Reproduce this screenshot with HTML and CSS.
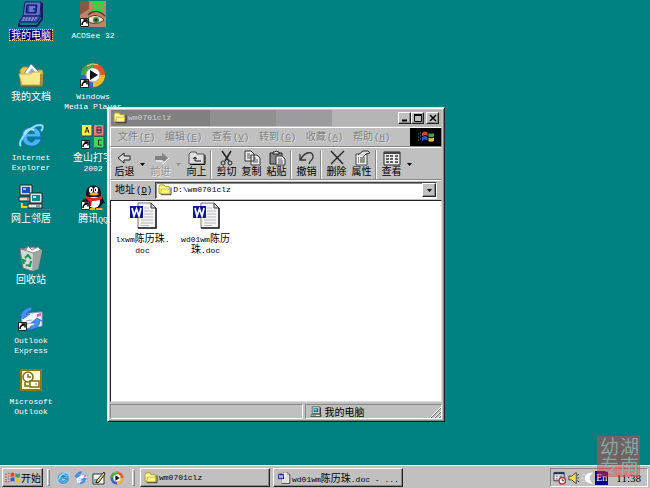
FILE: index.html
```html
<!DOCTYPE html>
<html lang="zh-CN">
<head>
<meta charset="utf-8">
<title>wm0701clz</title>
<link rel="stylesheet" href="styles.css">
</head>
<body>
<svg class="sprites" aria-hidden="true">
  <symbol id="folder" viewBox="0 0 16 14">
    <path d="M1 11V3l1-2h5l1 2h5v8z" fill="#f8ee78" stroke="#b09a20"/>
    <path d="M2 4h4l1 1h5" stroke="#fff" fill="none"/>
    <path d="M3 12.500h12V4" stroke="#222" fill="none"/>
    <path d="M3 11.500L4 6h10l-1 5.500z" fill="#fff68c" stroke="#a89018" stroke-width=".6"/>
  </symbol>
  <symbol id="word" viewBox="0 0 28 27">
    <path d="M9 1h13l5 5v20H9z" fill="#f4f4f8" stroke="#777"/>
    <path d="M27 6v20H9" fill="none" stroke="#222" stroke-width="1.500"/>
    <path d="M22 1v5h5z" fill="#ddd" stroke="#333"/>
    <path d="M15 6h5M15 9h9M15 12h9M15 15h9M12 18h12M12 21h12M12 23.500h8" stroke="#b8b8bc"/>
    <path d="M1 4h13v12H1z" fill="#101890"/>
    <path d="M3 6l2 8 2.500-7L10 14l2-8" fill="none" stroke="#fff" stroke-width="1.700"/>
  </symbol>
  <symbol id="ie" viewBox="0 0 26 26">
    <path d="M23 16c-2 10-19 10-19-3C4 1 23 1 23 14H9c1 7 7 6 8 2z" fill="#4bb4f4" stroke="#176fc4"/>
    <path d="M9 11c1-5 7-5 8 0z" fill="#067f8c"/>
    <path d="M3 23C-2 19 13 2 22 2c4 0 3 4 1 6" fill="none" stroke="#8bdcff" stroke-width="2"/>
    <path d="M6 11c2-4 6-6 10-4" fill="none" stroke="#b8eaff" stroke-width="1.500"/>
  </symbol>
  <symbol id="media" viewBox="0 0 26 26">
    <circle cx="13" cy="13" r="12" fill="#e8541c"/>
    <path d="M13 13V1a12 12 0 0 0-12 12z" fill="#43a548"/>
    <path d="M13 13H1a12 12 0 0 0 12 12z" fill="#3a63c8"/>
    <path d="M13 13v12a12 12 0 0 0 12-12z" fill="#f5bb27"/>
    <path d="M7 4a12 12 0 0 1 11-1" fill="none" stroke="#ffc18e"/>
    <circle cx="13" cy="13" r="7" fill="#fff" stroke="#aaa"/>
    <path d="M10 8l8 5-8 5z" fill="#111"/>
  </symbol>
  <symbol id="mail" viewBox="0 0 26 26">
    <path d="M3 8l21-2v14L5 23z" fill="#f5f8ff" stroke="#8aa2d8"/>
    <path d="M19 8l4-1v3l-4 1z" fill="#d76a9a"/>
    <path d="M8 15l6-1M8 18l5-1" stroke="#99aacc"/>
    <path d="M3 11C3 5 8 2 14 1l-1 4c-3 0-5 2-5 3l4 0-7 5-4-4z" fill="#4b91f2" stroke="#2062cf" stroke-width=".7"/>
    <path d="M22 14c0 6-4 9-11 10l2-4c3 0 4-2 4-3h-4l6-5 5 3z" fill="#4b91f2" stroke="#2062cf" stroke-width=".7"/>
  </symbol>
  <symbol id="shortcut" viewBox="0 0 9 9">
    <path d="M.5.5h8v8h-8z" fill="#fff" stroke="#222"/>
    <path d="M2 7c0-3 1-4 4-4M3.500 2H7v3.500" fill="none" stroke="#000" stroke-width="1.500"/>
  </symbol>
  <symbol id="pc" viewBox="0 0 16 16">
    <path d="M3 1h10v9H3z" fill="#d5d5c8" stroke="#555"/>
    <path d="M5 3h6v5H5z" fill="#0e7890"/>
    <path d="M6 4h3v2H6z" fill="#8fe7ec"/>
    <path d="M2 11h11l1 3H1z" fill="#eee" stroke="#333"/>
    <path d="M3 12.500h5" stroke="#398b75"/>
    <path d="M14 2v9l1 3" stroke="#111" fill="none"/>
  </symbol>
  <symbol id="flag" viewBox="0 0 18 14">
    <path d="M7 2c2-1 3-1 4 0v4c-1-1-2-1-4 0z" fill="#e5442a"/>
    <path d="M12 2c2 1 3 1 5 0v4c-2 1-3 1-5 0z" fill="#43a548"/>
    <path d="M7 7c2-1 3-1 4 0v4c-1-1-2-1-4 0z" fill="#2759d4"/>
    <path d="M12 7c2 1 3 1 5 0v4c-2 1-3 1-5 0z" fill="#eac22e"/>
    <path d="M1 3h2M4 2h2M1 6h2M4 5h2M1 9h2M4 8h2M1 11h2M4 11h2" stroke="#d14a3a"/>
  </symbol>
  <symbol id="flag-dark" viewBox="0 0 18 14">
    <path d="M5 3c2-2 4-2 6 0v4C9 5 7 5 5 7z" fill="#e5442a"/>
    <path d="M11 3c2 1 4 1 6 0v4c-2 1-4 1-6 0z" fill="#43a548"/>
    <path d="M5 7c2-2 4-2 6 0v4c-2-2-4-2-6 0z" fill="#2759d4"/>
    <path d="M11 7c2 1 4 1 6 0v4c-2 1-4 1-6 0z" fill="#eac22e"/>
    <path d="M5 7c2-2 4-2 6 0 2 1 4 1 6 0M11 3v8" fill="none" stroke="#000"/>
    <path d="M1 4h1M3 3h1M1 7h1M3 6h1M1 10h1M3 9h1" stroke="#58a"/>
  </symbol>
</svg>

<main class="desktop">
  <ul class="icons">
    <li><a class="shortcut selected" href="#"><svg class="big" viewBox="0 0 26 26"><path d="M7 1h16l-1 14H5z" fill="#6472c8" stroke="#141c70"/><path d="M9 4h10l-1 8H8z" fill="#28379f" stroke="#0c145d"/><path d="M11 6h6M11 8h4M11 10h5" stroke="#aeb9f0"/><path d="M5 15l-4 6h18l4-6z" fill="#4652a8" stroke="#101866"/><path d="M5 17h14M4 19h13" stroke="#a3ade9" stroke-dasharray="2 1"/><path d="M1 22v3h18l5-7V2" fill="none" stroke="#151b64" stroke-width="2"/></svg><span class="label">我的电脑</span></a></li>
    <li><a class="shortcut" href="#"><svg class="big" viewBox="0 0 26 26"><path d="M2 8l3-3h5l2 3h12l1 2-1 14H3z" fill="#e3c952" stroke="#a38f36"/><path d="M7 10l6-8 8 8v8H7z" fill="#fff" stroke="#889"/><path d="M10 11l4-5 4 5z" fill="#85aee9"/><path d="M1 12h11l3-2h8l-1 13H4z" fill="#fae98b" stroke="#c8ad4c"/><path d="M4 24h19V12" fill="none" stroke="#776a29"/></svg><span class="label">我的文档</span></a></li>
    <li><a class="shortcut" href="#"><svg class="big"><use href="#ie"/></svg><span class="label en">Internet<br>Explorer</span></a></li>
    <li><a class="shortcut" href="#"><svg class="big" viewBox="0 0 26 26"><path d="M2 1h12v10H2zM1 13h13v4H1z" fill="#ddd" stroke="#222"/><path d="M4 3h8v6H4z" fill="#174bc9"/><path d="M5 4h3v2H5z" fill="#9bc4ff"/><path d="M4 19v4h7" fill="none" stroke="#e3cc2c" stroke-width="2"/><path d="M12 9h12v10H12zM10 20h14v4H10z" fill="#e5e5e5" stroke="#222"/><path d="M14 11h8v6h-8z" fill="#07899a"/><path d="M15 12h3v2h-3z" fill="#b5ffff"/><path d="M18 22h4M9 15h3" stroke="#444"/></svg><span class="label">网上邻居</span></a></li>
    <li><a class="shortcut" href="#"><svg class="big" viewBox="0 0 26 26"><path d="M2 4l13-2 9 3-4 19-6 2-9-3z" fill="#d7d9d8" stroke="#777"/><path d="M15 8l9-3-4 19-6 2z" fill="#9da6a3"/><path d="M3 4l5 1 2-4 4 4 6-3 3 3-8 3z" fill="#fff" stroke="#888"/><path d="M7 13l3-3 3 4M13 16l-1 5-4-1M6 19l-1-4 3 1" fill="none" stroke="#17934c" stroke-width="2"/></svg><span class="label">回收站</span></a></li>
    <li><a class="shortcut" href="#"><svg class="big"><use href="#mail"/><use href="#shortcut" x="0" y="16" width="9" height="9"/></svg><span class="label en">Outlook<br>Express</span></a></li>
    <li><a class="shortcut" href="#"><svg class="big" viewBox="0 0 26 26"><path d="M3 3h20v20H3z" fill="#fff9d8" stroke="#8b7a0a" stroke-width="2"/><circle cx="10" cy="10" r="5" fill="#fff" stroke="#7c6c06" stroke-width="1.500"/><path d="M10 7v3h3M7 15v4h4" fill="none" stroke="#7c6c06" stroke-width="1.500"/><path d="M12 14h9v6h-9z" fill="#fff" stroke="#7c6c06" stroke-width="1.500"/><path d="M17 17h2" stroke="#7c6c06"/></svg><span class="label en">Microsoft<br>Outlook</span></a></li>
  </ul>
  <ul class="icons">
    <li><a class="shortcut" href="#"><svg class="big" viewBox="0 0 26 26"><path d="M0 0h26v26H0z" fill="#bd846c"/><path d="M0 0h9v8L0 14z" fill="#8c5844"/><path d="M8 14c5-5 11-5 17 1" fill="none" stroke="#633428" stroke-width="1.500"/><path d="M6 19c5-6 13-6 18 0-5 4-12 5-18 0z" fill="#eedccc" stroke="#442"/><circle cx="16" cy="19" r="3" fill="#388646"/><circle cx="16" cy="19" r="1.300" fill="#132"/><path d="M12 2h5l-2 3c3 1 1 5-4 4M19 3c3-3 6 0 3 2l-4 4h6" fill="none" stroke="#1de52c" stroke-width="2"/><use href="#shortcut" x="0" y="17" width="9" height="9"/></svg><span class="label en">ACDSee 32</span></a></li>
    <li><a class="shortcut" href="#"><svg class="big"><use href="#media"/><use href="#shortcut" x="0" y="17" width="9" height="9"/></svg><span class="label en">Windows<br>Media Player</span></a></li>
    <li><a class="shortcut" href="#"><svg class="big" viewBox="0 0 26 26"><path d="M2 2h10v11H2z" fill="#f8ec48"/><path d="M14 2h10v11H14z" fill="#ee7c86"/><path d="M14 14h10v11H14z" fill="#3bd85a"/><path d="M2 13h10V2M14 13h10V2M14 25h10V14" fill="none" stroke="#444"/><path d="M5 10l2-6 2 6M6 8h3M17 4v6h4V7h-4 4V4zM21.500 17h-3v5h3" fill="none" stroke="#333"/><use href="#shortcut" x="1" y="17" width="9" height="9"/></svg><span class="label">金山打字<br><span class="en">2002</span></span></a></li>
    <li><a class="shortcut" href="#"><svg class="big" viewBox="0 0 26 26"><path d="M4 14l-3 5 5 1M22 13l3 6-5 1" fill="#171820"/><ellipse cx="14" cy="17" rx="9" ry="8" fill="#171820"/><ellipse cx="14" cy="18" rx="6" ry="6" fill="#fff"/><path d="M6 9c0-10 15-10 15 0v4H6z" fill="#171820"/><ellipse cx="11" cy="6" rx="2" ry="3" fill="#fff"/><ellipse cx="16" cy="6" rx="2" ry="3" fill="#fff"/><path d="M11.500 5v2M15.500 5v2" stroke="#000"/><path d="M9 10c3-2 7-2 10 0-3 2-7 2-10 0zM9 24h6v2H8zM16 24h6l1 2h-7z" fill="#f6ab20"/><path d="M5 11c6 4 12 4 17 0v4c-5 2-7 2-10 2l-1 5H8v-6l-3-2z" fill="#e5282a"/><use href="#shortcut" x="1" y="17" width="9" height="9"/></svg><span class="label">腾讯<span class="en">QQ</span></span></a></li>
  </ul>

  <section class="window" aria-label="wm0701clz">
    <header class="titlebar">
      <svg class="small"><use href="#folder"/></svg>
      <h1 class="en">wm0701clz</h1>
      <button class="bevel winbtn" aria-label="最小化"><svg viewBox="0 0 10 8"><path d="M2 6.500h5" stroke="#000" stroke-width="2"/></svg></button>
      <button class="bevel winbtn" aria-label="最大化"><svg viewBox="0 0 10 8"><path d="M1 .5h8M1.500 1v6.500h7V1M1 1.500h8" fill="none" stroke="#000"/></svg></button>
      <button class="bevel winbtn close" aria-label="关闭"><svg viewBox="0 0 10 8"><path d="M2 1l6 6M8 1L2 7" stroke="#000" stroke-width="1.500"/></svg></button>
    </header>
    <div class="menurow">
      <nav class="menu">
        <button>文件<span class="en">(<u>F</u>)</span></button>
        <button>编辑<span class="en">(<u>E</u>)</span></button>
        <button>查看<span class="en">(<u>V</u>)</span></button>
        <button>转到<span class="en">(<u>G</u>)</span></button>
        <button>收藏<span class="en">(<u>A</u>)</span></button>
        <button>帮助<span class="en">(<u>H</u>)</span></button>
      </nav>
      <div class="brand"><svg viewBox="0 0 18 14"><use href="#flag-dark"/></svg></div>
    </div>
    <div class="toolbar">
      <button class="tool"><svg viewBox="0 0 20 16"><path d="M3 8l6-5v3h6v4H9v3z" fill="#ddd" stroke="#222"/></svg>后退</button>
      <button class="drop" aria-label="后退列表"><svg viewBox="0 0 5 3"><path d="M0 0h5L2.500 3z"/></svg></button>
      <button class="tool off" disabled><svg viewBox="0 0 20 16"><path d="M17 8l-6-5v3H4v4h7v3z" fill="#808080"/><path d="M5 11h7v3l6-6" fill="none" stroke="#fff"/></svg>前进</button>
      <button class="drop off" disabled aria-label="前进列表"><svg viewBox="0 0 5 3"><path d="M0 0h5L2.500 3z"/></svg></button>
      <button class="tool"><svg viewBox="0 0 20 16"><path d="M2 14V4l2-2h5l1 2h7v10z" fill="#ddd" stroke="#555"/><path d="M3 14.500h15V5" fill="none" stroke="#000"/><path d="M8 11h6M8 11V7M6 9l2-2 2 2" fill="none" stroke="#111"/></svg>向上</button>
      <i class="sep"></i>
      <button class="tool"><svg viewBox="0 0 20 16"><path d="M5 1l7 10M14 1L8 11" stroke="#222" stroke-width="1.500"/><circle cx="6" cy="13" r="2" fill="none" stroke="#222"/><circle cx="13" cy="13" r="2" fill="none" stroke="#222"/></svg>剪切</button>
      <button class="tool"><svg viewBox="0 0 20 16"><path d="M3 1h6l3 3v7H3zM9 5h6l3 3v7H9z" fill="#eee" stroke="#333"/><path d="M5 4h3M5 6h4M5 8h4M11 8h3M11 10h5M11 12h5" stroke="#555"/></svg>复制</button>
      <button class="tool"><svg viewBox="0 0 20 16"><path d="M3 3h12v11H3z" fill="#888" stroke="#222"/><path d="M6 4V2h2l1-1 2 1h1v2z" fill="#eee" stroke="#222"/><path d="M9 6h6l3 3v6H9z" fill="#eee" stroke="#333"/><path d="M11 9h4M11 11h5M11 13h5" stroke="#555"/></svg>粘贴</button>
      <i class="sep"></i>
      <button class="tool"><svg viewBox="0 0 20 16"><path d="M3 4v6h6M4 9c4-8 13-8 12-2 0 3-3 3-4 7" fill="none" stroke="#333" stroke-width="1.300"/></svg>撤销</button>
      <i class="sep"></i>
      <button class="tool"><svg viewBox="0 0 20 16"><path d="M4 1l12 13M17 1L4 14" fill="none" stroke="#222" stroke-width="1.300"/></svg>删除</button>
      <button class="tool"><svg viewBox="0 0 20 16"><path d="M4 4h11v11H4z" fill="#f3f3f3" stroke="#444"/><path d="M6 8h1M8 8h5M6 10h1M8 10h5M6 12h1M8 12h5" stroke="#333"/><path d="M6 5l5-4h5l2 2-4 1-3 3" fill="#ddd" stroke="#333"/></svg>属性</button>
      <i class="sep"></i>
      <button class="tool"><svg viewBox="0 0 20 16"><path d="M2 2h16v13H2z" fill="#eee" stroke="#222"/><path d="M2 3h16" stroke="#444" stroke-width="2"/><path d="M4 6h3M8 6h3M13 6h3M4 9h3M8 9h3M13 9h3M4 12h3M8 12h3M13 12h3" stroke="#333" stroke-width="1.500"/></svg>查看</button>
      <button class="drop" aria-label="查看方式"><svg viewBox="0 0 5 3"><path d="M0 0h5L2.500 3z"/></svg></button>
    </div>
    <div class="address">
      <label for="path">地址<span class="en">(<u>D</u>)</span></label>
      <div class="combo">
        <svg class="small"><use href="#folder"/></svg>
        <input id="path" class="en" type="text" value="D:\wm0701clz">
        <button class="bevel" aria-label="展开"><svg viewBox="0 0 5 3"><path d="M0 0h5L2.500 3z"/></svg></button>
      </div>
    </div>
    <div class="files">
      <a class="file" href="#"><svg><use href="#word"/></svg><span><span class="en">lxwm</span>陈历珠<span class="en">.<br>doc</span></span></a>
      <a class="file" href="#"><svg><use href="#word"/></svg><span><span class="en">wd01wm</span>陈历<br>珠<span class="en">.doc</span></span></a>
    </div>
    <footer class="status">
      <div class="pane"></div>
      <div class="pane"><svg class="small"><use href="#pc"/></svg>我的电脑<svg class="grip" viewBox="0 0 12 12"><path d="M1 12L12 1M5 12l7-7M9 12l3-3" stroke="#fff"/><path d="M2 12L12 2M6 12l6-6M10 12l2-2" stroke="#777"/></svg></div>
    </footer>
  </section>
</main>

<footer class="taskbar">
  <button class="bevel start"><svg viewBox="0 0 18 14"><use href="#flag"/></svg>开始</button>
  <i class="handle"></i>
  <div class="quick">
    <button aria-label="Internet Explorer"><svg><use href="#ie"/></svg></button>
    <button aria-label="Outlook Express"><svg><use href="#mail"/></svg></button>
    <button aria-label="显示桌面"><svg viewBox="0 0 14 14"><path d="M1 3h11v10H1z" fill="#fff" stroke="#333"/><path d="M2 8h5v4H2z" fill="#6fb9b1"/><path d="M12 1L5 9l-1 3 3-1 6-8z" fill="#e8da70" stroke="#222"/></svg></button>
    <button aria-label="Windows Media Player"><svg><use href="#media"/></svg></button>
  </div>
  <i class="handle"></i>
  <button class="bevel task"><svg class="small"><use href="#folder"/></svg><span class="en">wm0701clz</span></button>
  <button class="bevel task"><svg class="small"><use href="#word"/></svg><span><span class="en">wd01wm</span>陈历珠<span class="en">.doc - ...</span></span></button>
  <div class="tray">
    <svg viewBox="0 0 14 14"><path d="M1 1h11v9H1z" fill="#eee" stroke="#333"/><path d="M1 2h11" stroke="#236" stroke-width="2"/><path d="M3 5h2M3 8h2M7 5h3" stroke="#447"/><circle cx="10" cy="10" r="3.500" fill="#fff" stroke="#c52835" stroke-width="1.500"/><path d="M10 8v2h2" fill="none" stroke="#222"/></svg>
    <svg viewBox="0 0 14 14"><path d="M2 5h3l5-4v12L5 9H2z" fill="#ece34a" stroke="#444"/><path d="M11 4l2-1M11 7h2M11 10l2 1" stroke="#333"/></svg>
    <svg viewBox="0 0 14 14"><path d="M1 3h3M0 7h3M1 11h3" stroke="#ddd"/><path d="M13 1C1 1 1 13 13 13 8 9 8 5 13 1z" fill="#fff"/></svg>
    <span class="lang">En</span>
    <time>11:38</time>
  </div>
</footer>
<div class="seal">湖南幼专</div>
</body>
</html>
```

FILE: styles.css
```css
* { box-sizing: border-box; }

body {
  margin: 0;
  min-height: 100vh;
  display: flex;
  flex-direction: column;
  overflow: hidden;
  position: relative;
  background: #008080;
  color: #000;
  font: 10px/10px "Noto Sans CJK SC", sans-serif;
}

button, input { font: inherit; color: inherit; margin: 0; padding: 0; border: 0; background: none; }
a { color: inherit; text-decoration: none; }
svg { display: block; flex: none; }
.sprites { position: absolute; width: 0; height: 0; }
.en { font-family: "Liberation Mono", monospace; font-size: 8px; }
span > .en { line-height: 0; }
.small { width: 14px; height: 12px; }

.bevel {
  background: #c0c0c0;
  border: 1px solid;
  border-color: #fff #222 #222 #fff;
  box-shadow: inset -1px -1px #888;
}

/* Desktop */
.desktop { flex: 1; display: flex; align-items: flex-start; position: relative; }
.icons { list-style: none; margin: 0; padding: 1px 0 0; width: 62px; display: grid; grid-auto-rows: 61px; }
.shortcut { display: flex; flex-direction: column; align-items: center; gap: 3px; color: #fff; white-space: nowrap; text-align: center; }
.big { width: 26px; height: 26px; }
.label { padding: 0 1px; }
.label.en { padding-top: 1px; }
.selected .label { background: #000080; outline: 1px dotted #d8d890; }

/* Explorer window */
.window {
  position: absolute;
  left: 107px;
  top: 107px;
  width: 338px;
  padding: 2px;
  background: #c0c0c0;
  border: 1px solid;
  border-color: #ddd #222 #222 #ddd;
  box-shadow: inset 1px 1px #fff, inset -1px -1px #808080;
}
.titlebar {
  display: flex;
  align-items: center;
  height: 16px;
  margin: 0 1px 1px;
  padding: 0 2px;
  background: linear-gradient(90deg, #808080 0 30%, #909090 30% 50%, #9c9ca0 50% 67%, #b4b4b4 67%);
  color: #d0d0d0;
}
.titlebar h1 { flex: 1; margin: 0; padding-left: 1px; font-weight: normal; }
.winbtn { width: 13px; height: 12px; padding: 1px; }
.winbtn svg { width: 10px; height: 8px; }
.close { margin-left: 2px; }

.menurow { display: flex; height: 20px; border: 1px solid; border-color: #fff #888 #888 #fff; }
.menu { flex: 1; display: grid; grid-template-columns: repeat(6, 47px); padding-left: 7px; }
.menu button { text-align: left; color: #808080; white-space: nowrap; text-shadow: 1px 1px #ddd; }
.menu .en, .address label .en { padding-left: 1px; font-size: 9px; }
.brand { width: 31px; background: #000; display: grid; place-items: center; }
.brand svg { width: 18px; height: 14px; }

.toolbar { display: flex; height: 33px; padding: 2px 0 0 1px; border: 1px solid; border-color: #fff #c0c0c0 #888 #fff; }
.tool { width: 25px; flex: none; display: flex; flex-direction: column; align-items: center; white-space: nowrap; }
.tool svg { width: 20px; height: 16px; }
.drop { width: 11px; flex: none; display: grid; place-items: center; }
.drop svg, .combo button svg { width: 5px; height: 3px; }
.off { color: #909090; fill: #909090; text-shadow: 1px 1px #eee; }
.sep { width: 2px; margin: 0 2px 0 1px; border-left: 1px solid #888; border-right: 1px solid #fff; }

.address { display: flex; align-items: center; gap: 3px; height: 20px; padding: 0 4px; border: 1px solid; border-color: #fff #c0c0c0 #c0c0c0 #fff; }
.combo { flex: 1; display: flex; align-items: center; height: 17px; padding-left: 2px; background: #fff; border: 1px solid; border-color: #444 #fff #fff #444; box-shadow: inset 1px 1px #888; }
.combo input { flex: 1; min-width: 0; padding-left: 1px; outline: 0; }
.combo button { width: 14px; height: 14px; display: grid; place-items: center; }

.files {
  display: grid;
  grid-template-columns: repeat(auto-fill, 63px);
  min-height: 202px;
  padding-top: 1px;
  background: #fff;
  border: 1px solid;
  border-color: #222 #ddd #ddd #222;
}
.file { display: flex; flex-direction: column; align-items: center; gap: 3px; line-height: 11px; text-align: center; white-space: nowrap; }
.file svg { width: 28px; height: 27px; }

.status { display: flex; gap: 2px; height: 17px; padding-top: 2px; }
.pane { flex: 1; display: flex; align-items: center; gap: 2px; padding-left: 3px; border: 1px solid; border-color: #888 #fff #fff #888; }
.pane:first-child { flex: 0 0 58%; }
.grip { width: 12px; height: 12px; margin-left: auto; align-self: flex-end; }

/* Taskbar */
.taskbar { display: flex; align-items: center; height: 23px; padding: 1px 2px 0; background: #c0c0c0; border-top: 1px solid #fff; }
.start { display: flex; align-items: center; width: 41px; height: 19px; padding-left: 1px; white-space: nowrap; }
.start svg { width: 17px; height: 14px; }
.handle { width: 3px; height: 17px; margin: 0 2px 0 4px; border: 1px solid; border-color: #fff #888 #888 #fff; }
.quick { display: flex; gap: 4px; padding: 0 4px; }
.quick svg { width: 14px; height: 14px; }
.task { display: flex; align-items: center; gap: 1px; width: 130px; height: 19px; margin-left: 3px; padding-left: 3px; white-space: nowrap; }
.tray { display: flex; align-items: center; gap: 1px; height: 19px; margin-left: auto; padding: 0 6px 0 2px; border: 1px solid; border-color: #888 #fff #fff #888; }
.tray > svg { width: 13px; height: 14px; }
.lang { padding: 2px 1px; background: #000080; color: #fff; font-family: "Liberation Serif", serif; }
.tray time { padding-left: 7px; font-family: "Liberation Serif", serif; font-size: 11px; }

.seal {
  position: absolute;
  right: 10px;
  bottom: 11px;
  width: 43px;
  height: 41px;
  padding: 1px;
  background: rgba(225, 65, 65, .5);
  color: rgba(130, 185, 180, .85);
  font-size: 19px;
  line-height: 20px;
  writing-mode: vertical-rl;
  pointer-events: none;
}
```
